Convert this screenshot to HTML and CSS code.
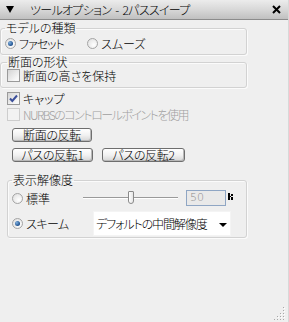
FILE: index.html
```html
<!DOCTYPE html>
<html lang="ja">
<head>
<meta charset="utf-8">
<link rel="stylesheet" href="styles.css">
</head>
<body>
<div class="window">
  <div class="titlebar">
    <span class="tri"></span>
    <span class="title">ツールオプション - 2パススイープ</span>
    <svg class="close" width="9" height="9" viewBox="0 0 9 9"><path d="M1 1L8 8M8 1L1 8" stroke="#000" stroke-width="2"/></svg>
  </div>
  <div class="content">
    <fieldset class="group g1">
      <legend>モデルの種類</legend>
      <div class="row">
        <span class="opt w-facet"><span class="radio on"></span><span class="tight">ファセット</span></span>
        <span class="opt"><span class="radio"></span>スムーズ</span>
      </div>
    </fieldset>
    <fieldset class="group g2">
      <legend>断面の形状</legend>
      <div class="row chkrow"><span class="check"></span>断面の高さを保持</div>
    </fieldset>
    <div class="row chkrow cap"><span class="check"><svg width="11" height="11" viewBox="0 0 11 11"><path d="M2 5.5L4.3 8L9 2.5" fill="none" stroke="#3b4f9a" stroke-width="2"/></svg></span>キャップ</div>
    <div class="row chkrow nurbs"><span class="check dis"></span><span class="nurbs-text">NURBSのコントロールポイントを使用</span></div>
    <div class="btnrow b1"><span class="btn w80">断面の反転</span></div>
    <div class="btnrow b2"><span class="btn w81">パスの反転1</span><span class="btn w83">パスの反転2</span></div>
    <fieldset class="group g3">
      <legend>表示解像度</legend>
      <div class="row std">
        <span class="opt lbl1"><span class="radio"></span>標準</span>
        <span class="slider"><span class="thumb"></span></span>
        <span class="num">50</span>
        <svg class="mark" width="5" height="7" viewBox="0 0 5 7"><path d="M0 0h2v7H0zM2 3h1v1H2zM3 1h2v2H3zM3 4h2v3H3z" fill="#000"/></svg>
      </div>
      <div class="row scheme">
        <span class="opt lbl2"><span class="radio on"></span>スキーム</span>
        <span class="select"><span class="sel-text">デフォルトの中間解像度</span><span class="arrow"></span></span>
      </div>
    </fieldset>
  </div>
  <svg class="grip" width="12" height="14" viewBox="0 0 12 14">
    <g fill="#a8a8a8">
      <rect x="9" y="1" width="1" height="1"/>
      <rect x="9" y="4" width="1" height="1"/><rect x="6" y="7" width="1" height="1"/>
      <rect x="9" y="7" width="1" height="1"/>
      <rect x="3" y="10" width="1" height="1"/><rect x="6" y="10" width="1" height="1"/><rect x="9" y="10" width="1" height="1"/>
      <rect x="0" y="13" width="1" height="1"/><rect x="3" y="13" width="1" height="1"/><rect x="6" y="13" width="1" height="1"/><rect x="9" y="13" width="1" height="1"/>
    </g>
    <g fill="#ffffff">
      <rect x="10" y="2" width="1" height="1"/>
      <rect x="10" y="5" width="1" height="1"/><rect x="7" y="8" width="1" height="1"/>
      <rect x="10" y="8" width="1" height="1"/>
      <rect x="4" y="11" width="1" height="1"/><rect x="7" y="11" width="1" height="1"/><rect x="10" y="11" width="1" height="1"/>
    </g>
  </svg>
</div>
</body>
</html>
```

FILE: styles.css
```css
html, body {
  margin: 0;
  padding: 0;
  background: #efefef;
}
body {
  font-family: "Noto Sans CJK JP", "Noto Sans", sans-serif;
  font-size: 12px;
  font-weight: 300;
  color: #000;
  font-feature-settings: "palt";
}
.window {
  height: 322px;
  display: flex;
  flex-direction: column;
  box-sizing: border-box;
  border-right: 1px solid #d8d8d8;
}
.titlebar {
  height: 19px;
  border-bottom: 1px solid #8c8c8c;
  background: linear-gradient(#ececec, #d6d6d6 55%, #c0c0c0);
  display: flex;
  align-items: center;
  flex-shrink: 0;
}
.tri {
  width: 0;
  height: 0;
  border-left: 4px solid transparent;
  border-right: 4px solid transparent;
  border-top: 7px solid #000;
  margin-left: 6px;
  margin-right: 16px;
}
.title {
  line-height: 19px;
  flex: 1;
  letter-spacing: -0.7px;
  word-spacing: 2px;
}
.close {
  margin-right: 7px;
}
.content {
  flex: 1;
}
.group {
  margin: 0;
  padding: 0;
  border: 1px solid #d2d2d2;
  border-radius: 3px;
  box-shadow: inset 1px 1px 0 #fbfbfb, 1px 1px 0 #fbfbfb;
  min-width: 0;
}
.group legend {
  padding: 0 1px;
  margin-left: 0;
  line-height: 12px;
  height: 12px;
}
.g1 {
  margin-top: 2px;
  width: 247px;
  box-sizing: border-box;
  padding: 3px 0 4px 4px;
}
.g2 {
  margin-top: 1px;
  width: 247px;
  box-sizing: border-box;
  padding: 1px 0 5px 6px;
}
.g3 {
  margin-top: 12px;
  margin-left: 7px;
  width: 240px;
  box-sizing: border-box;
  padding: 4px 0 1px 4px;
}
.row {
  display: flex;
  align-items: center;
  height: 13px;
  line-height: 13px;
  white-space: nowrap;
}
.opt {
  display: flex;
  align-items: center;
}
.w-facet {
  width: 82px;
}
.tight {
  letter-spacing: -1px;
}
.radio {
  width: 11px;
  height: 11px;
  box-sizing: border-box;
  border-radius: 50%;
  border: 1px solid #a4a4a4;
  background: radial-gradient(circle at 65% 65%, #ffffff, #dcdcdc);
  margin-right: 3px;
  position: relative;
  flex-shrink: 0;
}
.radio.on::after {
  content: "";
  position: absolute;
  left: 2px;
  top: 2px;
  width: 5px;
  height: 5px;
  border-radius: 50%;
  background: radial-gradient(circle at 35% 35%, #7fb0e0, #1d4f8c 70%);
}
.chkrow {
  padding-left: 7px;
}
.g2 .chkrow {
  padding-left: 0;
}
.check {
  width: 13px;
  height: 13px;
  box-sizing: border-box;
  border: 1px solid #9a9a9a;
  background: linear-gradient(135deg, #d4d4d4, #f8f8f8 80%);
  margin-right: 3px;
  display: flex;
  align-items: center;
  justify-content: center;
  flex-shrink: 0;
}
.check.dis {
  border-color: #cdcdcd;
  background: #f2f2f2;
}
.cap {
  margin-top: 4px;
}
.nurbs {
  margin-top: 3px;
  color: #a0a0a0;
}
.nurbs-text {
  letter-spacing: -1.5px;
}
.btnrow {
  display: flex;
  padding-left: 12px;
  gap: 9px;
}
.b1 {
  margin-top: 7px;
}
.b2 {
  margin-top: 6px;
}
.btn {
  height: 14px;
  box-sizing: border-box;
  border: 1px solid #6e6e6e;
  border-radius: 3px;
  background: linear-gradient(#ffffff, #f2f2f2 50%, #d6d6d6);
  box-shadow: inset -1px -1px 0 #b8b8b8;
  display: flex;
  align-items: center;
  justify-content: center;
  line-height: 12px;
  letter-spacing: -0.3px;
}
.w80 { width: 80px; }
.w81 { width: 81px; }
.w83 { width: 83px; }
.std {
  height: 16px;
}
.lbl1 {
  width: 71px;
}
.slider {
  width: 95px;
  height: 14px;
  position: relative;
  flex-shrink: 0;
}
.slider::before {
  content: "";
  position: absolute;
  left: 0;
  right: 0;
  top: 6px;
  height: 1px;
  background: #9a9a9a;
  box-shadow: 0 1px 0 #ffffff;
}
.thumb {
  position: absolute;
  left: 45px;
  top: 0;
  width: 6px;
  height: 13px;
  box-sizing: border-box;
  border: 1px solid #8a8a8a;
  border-radius: 1px 1px 3px 3px;
  background: linear-gradient(90deg, #ffffff, #e6e6e6);
}
.num {
  margin-left: 8px;
  width: 40px;
  height: 16px;
  box-sizing: border-box;
  border: 1px solid #8fa6c4;
  background: #e9e9e9;
  color: #8a8a8a;
  padding-left: 3px;
  line-height: 14px;
  font-family: "DejaVu Sans", sans-serif;
  font-size: 11px;
}
.mark {
  margin-left: 2px;
  margin-top: -4px;
}
.scheme {
  margin-top: 5px;
  height: 25px;
}
.lbl2 {
  width: 81px;
  letter-spacing: -0.5px;
}
.select {
  width: 138px;
  height: 25px;
  box-sizing: border-box;
  background: #ffffff;
  border: 1px solid #f4f4f4;
  display: flex;
  align-items: center;
  padding-left: 2px;
  line-height: 13px;
}
.sel-text {
  letter-spacing: -1.1px;
}
.arrow {
  margin-left: auto;
  margin-right: 3px;
  margin-top: 3px;
  width: 0;
  height: 0;
  border-left: 4px solid transparent;
  border-right: 4px solid transparent;
  border-top: 4px solid #000;
}
.grip {
  align-self: flex-end;
  margin: 0 2px 2px 0;
}
```
